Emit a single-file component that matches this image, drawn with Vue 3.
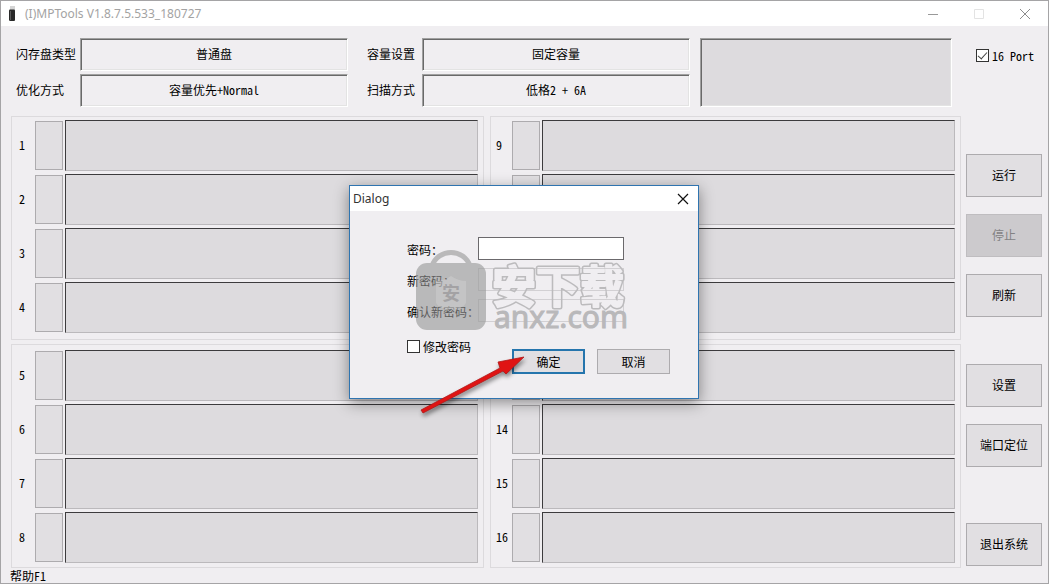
<script setup>
import { ref } from 'vue'

const groups = [
  [1, 2, 3, 4],
  [9, 10, 11, 12],
  [5, 6, 7, 8],
  [13, 14, 15, 16],
]
const sixteenPort = ref(true)
const changePassword = ref(false)
const password = ref('')
</script>

<template>
  <div class="window">
    <header class="titlebar">
      <svg class="app-icon" width="8" height="16" viewBox="0 0 8 16" aria-hidden="true">
        <rect x="2" y="0" width="5" height="5" fill="#d4d4d4" />
        <path d="M1 4.500q0-1 1-1h4q1 0 1 1v9.500q0 1-1 1h-3.500q-1.500 0-1.500-1z" fill="#292929" />
        <path d="M2.500 5v9" stroke="#5b5b5b" />
      </svg>
      <h1 class="title">(I)MPTools V1.8.7.5.533_180727</h1>
      <div class="window-controls">
        <button type="button" aria-label="Minimize">
          <svg width="12" height="12" viewBox="0 0 12 12"><path d="M1 6.500h10" stroke="#999" /></svg>
        </button>
        <button type="button" aria-label="Maximize" disabled>
          <svg width="12" height="12" viewBox="0 0 12 12"><path d="M1.500 1.500h9v9h-9z" fill="none" stroke="#e3e3e3" /></svg>
        </button>
        <button type="button" aria-label="Close">
          <svg width="12" height="12" viewBox="0 0 12 12"><path d="M1 1l10 10M11 1L1 11" stroke="#8c8c8c" /></svg>
        </button>
      </div>
    </header>

    <div class="content">
      <main class="main">
        <section class="settings">
          <span class="caption">闪存盘类型</span>
          <div class="field">普通盘</div>
          <span class="caption second">容量设置</span>
          <div class="field">固定容量</div>
          <div class="preview"></div>
          <span class="caption">优化方式</span>
          <div class="field">容量优先<span class="latin">+Normal</span></div>
          <span class="caption second">扫描方式</span>
          <div class="field">低格<span class="latin">2 + 6A</span></div>
        </section>

        <section class="ports">
          <div v-for="(group, g) in groups" :key="g" class="group" :class="{ right: g % 2 === 1, lower: g > 1 }">
            <div v-for="n in group" :key="n" class="slot">
              <span :id="`port-${n}`" class="number latin">{{ n }}</span>
              <button type="button" class="slot-button" :aria-labelledby="`port-${n}`"></button>
              <div class="slot-bar"></div>
            </div>
          </div>
        </section>
      </main>

      <aside class="sidebar">
        <label class="check port-check">
          <input v-model="sixteenPort" type="checkbox" />
          <span class="latin">16 Port</span>
        </label>
        <button type="button" class="action">运行</button>
        <button type="button" class="action" disabled>停止</button>
        <button type="button" class="action">刷新</button>
        <button type="button" class="action setup">设置</button>
        <button type="button" class="action">端口定位</button>
        <button type="button" class="action exit">退出系统</button>
      </aside>
    </div>

    <footer class="status">帮助<span class="latin">F1</span></footer>

    <div class="overlay">
      <section class="dialog" role="dialog" aria-labelledby="dialog-title">
        <header class="dialog-header">
          <h2 id="dialog-title">Dialog</h2>
          <button type="button" aria-label="Close dialog">
            <svg width="12" height="12" viewBox="0 0 12 12"><path d="M1 1l10 10M11 1L1 11" stroke="#111" stroke-width="1.200" /></svg>
          </button>
        </header>
        <form class="form" @submit.prevent>
          <div class="row">
            <label for="password">密码：</label>
            <input id="password" v-model="password" type="password" />
          </div>
          <div class="row">
            <label for="new-password">新密码：</label>
            <input id="new-password" type="password" disabled />
          </div>
          <div class="row">
            <label for="confirm-password">确认新密码：</label>
            <input id="confirm-password" type="password" disabled />
          </div>
          <div class="form-footer">
            <label class="check">
              <input v-model="changePassword" type="checkbox" />
              <span>修改密码</span>
            </label>
            <div class="form-buttons">
              <button type="submit" class="primary">确定</button>
              <button type="button">取消</button>
            </div>
          </div>
        </form>

        <svg class="watermark" width="220" height="100" viewBox="0 0 220 100">
          <defs>
            <mask id="hollow" maskUnits="userSpaceOnUse" x="0" y="0" width="220" height="100">
              <rect width="220" height="100" fill="#fff" />
              <text class="wm-title" x="78" y="57" fill="#000" stroke="#000" stroke-width="2">安下载</text>
            </mask>
          </defs>
          <g opacity="0.6">
            <path d="M18 20C24 2 50 2 56 20" fill="none" stroke="#969696" stroke-width="5" />
            <rect x="2" y="17" width="70" height="67" rx="11" fill="#969696" />
          </g>
          <path d="M22 35q8 0 15-5 7 5 15 5v22q-3 6-15 6-12 0-15-6z" fill="#d2d2d2" opacity="0.450" />
          <text class="wm-badge" x="28" y="54">安</text>
          <text class="wm-title" x="78" y="57" fill="#bcbbbd" stroke="#bcbbbd" stroke-width="5" mask="url(#hollow)">安下载</text>
          <text class="wm-domain" x="80" y="82">anxz.com</text>
        </svg>

        <svg class="arrow" width="116" height="68" viewBox="0 0 116 68" aria-hidden="true">
          <path d="M5 57L84 15 82 9 108 4 90 21 87 18 7 60z" fill="#e01414" stroke="#b01818" stroke-width="0.800" />
        </svg>
      </section>
    </div>
  </div>
</template>

<style>
html,
body {
  margin: 0;
  background: #f0eef1;
}
</style>

<style scoped>
.window,
.window * {
  box-sizing: border-box;
}
.window {
  position: relative;
  min-height: 100vh;
  display: flex;
  flex-direction: column;
  border: 1px solid #a5a4a6;
  background: #f0eef1;
  color: #000;
  font: 12px/16px "Noto Sans CJK SC", sans-serif;
}
button,
input {
  font: inherit;
  color: inherit;
  margin: 0;
  padding: 0;
}
.latin {
  font-family: "Noto Sans Mono CJK SC", "Liberation Mono", monospace;
  line-height: 12px;
  white-space: pre;
}
.titlebar {
  display: flex;
  align-items: center;
  height: 25px;
  padding-left: 7px;
  background: #fff;
}
.title {
  flex: 1;
  margin: 0 0 0 9px;
  font: 12px/16px "Noto Sans", sans-serif;
  color: #a3a3a3;
}
.window-controls {
  display: flex;
}
.window-controls button {
  display: grid;
  place-items: center;
  width: 46px;
  height: 24px;
  border: 0;
  background: none;
}
.content {
  display: flex;
  gap: 5px;
  padding: 12px 6px 0 10px;
}
.main {
  flex: 1;
  min-width: 0;
}
.settings {
  display: grid;
  grid-template-columns: 64px 1fr 74px 1fr 262px;
  grid-template-rows: 33px 33px;
  row-gap: 3px;
  align-items: stretch;
  padding: 0 9px 0 5px;
}
.caption {
  align-self: center;
  padding-bottom: 2px;
}
.caption.second {
  padding-left: 19px;
}
.field,
.preview {
  border: 1px solid;
  border-color: #a0a0a0 #fff #fff #a0a0a0;
  box-shadow: inset 1px 1px #696969, inset -1px -1px #e3e3e3;
}
.field {
  display: flex;
  align-items: center;
  justify-content: center;
  padding-bottom: 2px;
}
.preview {
  grid-column: 5;
  grid-row: 1 / 3;
  margin-left: 10px;
  background: #dddbde;
}
.ports {
  display: grid;
  grid-template-columns: 473fr 471fr;
  gap: 4px 6px;
  margin-top: 9px;
}
.group {
  display: grid;
  gap: 3px;
  padding: 3px 5px 6px 0;
  border: 1px solid #dcdadd;
}
.group.lower {
  padding: 5px 5px 4px 0;
}
.slot {
  display: grid;
  grid-template-columns: 23px 28px 1fr;
  height: 51px;
  align-items: center;
}
.right .slot {
  grid-template-columns: 21px 28px 1fr;
}
.number {
  padding: 0 0 2px 7px;
}
.right .number {
  padding-left: 5px;
}
.slot-button {
  height: 49px;
  border: 1px solid #adabae;
  border-radius: 0;
  background: #e1dfe2;
}
.slot-bar {
  height: 51px;
  margin-left: 2px;
  border: 1px solid;
  border-color: #3c3b3d #bbb9bc #bbb9bc #3c3b3d;
  background: #dddbde;
}
.sidebar {
  display: flex;
  flex-direction: column;
  gap: 17px;
  width: 76px;
}
.check {
  display: flex;
  align-items: center;
  gap: 3px;
  height: 13px;
  white-space: nowrap;
}
.check input {
  appearance: none;
  width: 13px;
  height: 13px;
  border: 1px solid #333;
  border-radius: 0;
  background: #fff;
}
.check input:checked {
  display: grid;
  place-items: center;
}
.check input:checked::before {
  content: "";
  width: 4px;
  height: 8px;
  margin-bottom: 2px;
  border: solid #444;
  border-width: 0 1px 1px 0;
  transform: rotate(42deg);
}
.port-check {
  margin: 11px 0 75px 10px;
}
.action {
  height: 43px;
  padding-bottom: 2px;
  border: 1px solid #adabae;
  border-radius: 0;
  background: #e1dfe2;
}
.action:disabled {
  background: #cccacd;
  border-color: #bfbdc0;
  color: #838284;
}
.setup {
  margin-top: 30px;
}
.exit {
  margin-top: 39px;
}
.status {
  height: 15px;
  padding-left: 9px;
  line-height: 15px;
}
.overlay {
  position: absolute;
  inset: 0;
  display: grid;
  place-items: center;
  padding: 0 1px 0 0;
}
.dialog {
  position: relative;
  width: 350px;
  border: 1px solid #2f74b0;
  background: #f0eef1;
  box-shadow: 0 4px 14px rgba(0, 0, 0, 0.42);
}
.dialog-header {
  display: flex;
  align-items: center;
  justify-content: space-between;
  height: 25px;
  padding: 0 8px 0 3px;
  background: #fff;
}
.dialog-header h2 {
  margin: 0;
  font: 12px/16px "Noto Sans", sans-serif;
  color: #333;
}
.dialog-header button {
  display: grid;
  place-items: center;
  width: 14px;
  height: 14px;
  border: 0;
  background: none;
}
.form {
  display: flex;
  flex-direction: column;
  gap: 8px;
  padding: 26px 28px 24px 57px;
}
.row {
  display: grid;
  grid-template-columns: 71px 146px;
  align-items: center;
  white-space: nowrap;
}
.row label {
  padding-top: 2px;
}
.row input {
  width: 100%;
  height: 23px;
  padding: 0 4px;
  border: 1px solid #6b696c;
  border-radius: 0;
  background: #fff;
}
.row input:disabled {
  border-color: #d2d0d3;
  background: #f0eef1;
}
.form-footer {
  display: flex;
  justify-content: space-between;
  margin-top: 10px;
}
.form-buttons {
  display: flex;
  gap: 12px;
  margin-top: 9px;
}
.form-buttons button {
  width: 73px;
  height: 25px;
  border: 1px solid #adabae;
  border-radius: 0;
  background: #e1dfe2;
}
.form-buttons .primary {
  border: 2px solid #2575ad;
}
.watermark {
  position: absolute;
  left: 64px;
  top: 60px;
  pointer-events: none;
}
.wm-title {
  font: 700 44px "Noto Sans CJK SC", sans-serif;
  stroke-linejoin: round;
}
.wm-badge {
  font: 700 18px "Noto Sans CJK SC", sans-serif;
  fill: #a3a2a4;
}
.wm-domain {
  font: 400 30px "Noto Sans", sans-serif;
  fill: #b9b8ba;
  stroke: #b9b8ba;
}
.arrow {
  position: absolute;
  left: 66px;
  top: 167px;
  filter: drop-shadow(1px 3px 2px rgba(0, 0, 0, 0.45));
  pointer-events: none;
}
</style>
